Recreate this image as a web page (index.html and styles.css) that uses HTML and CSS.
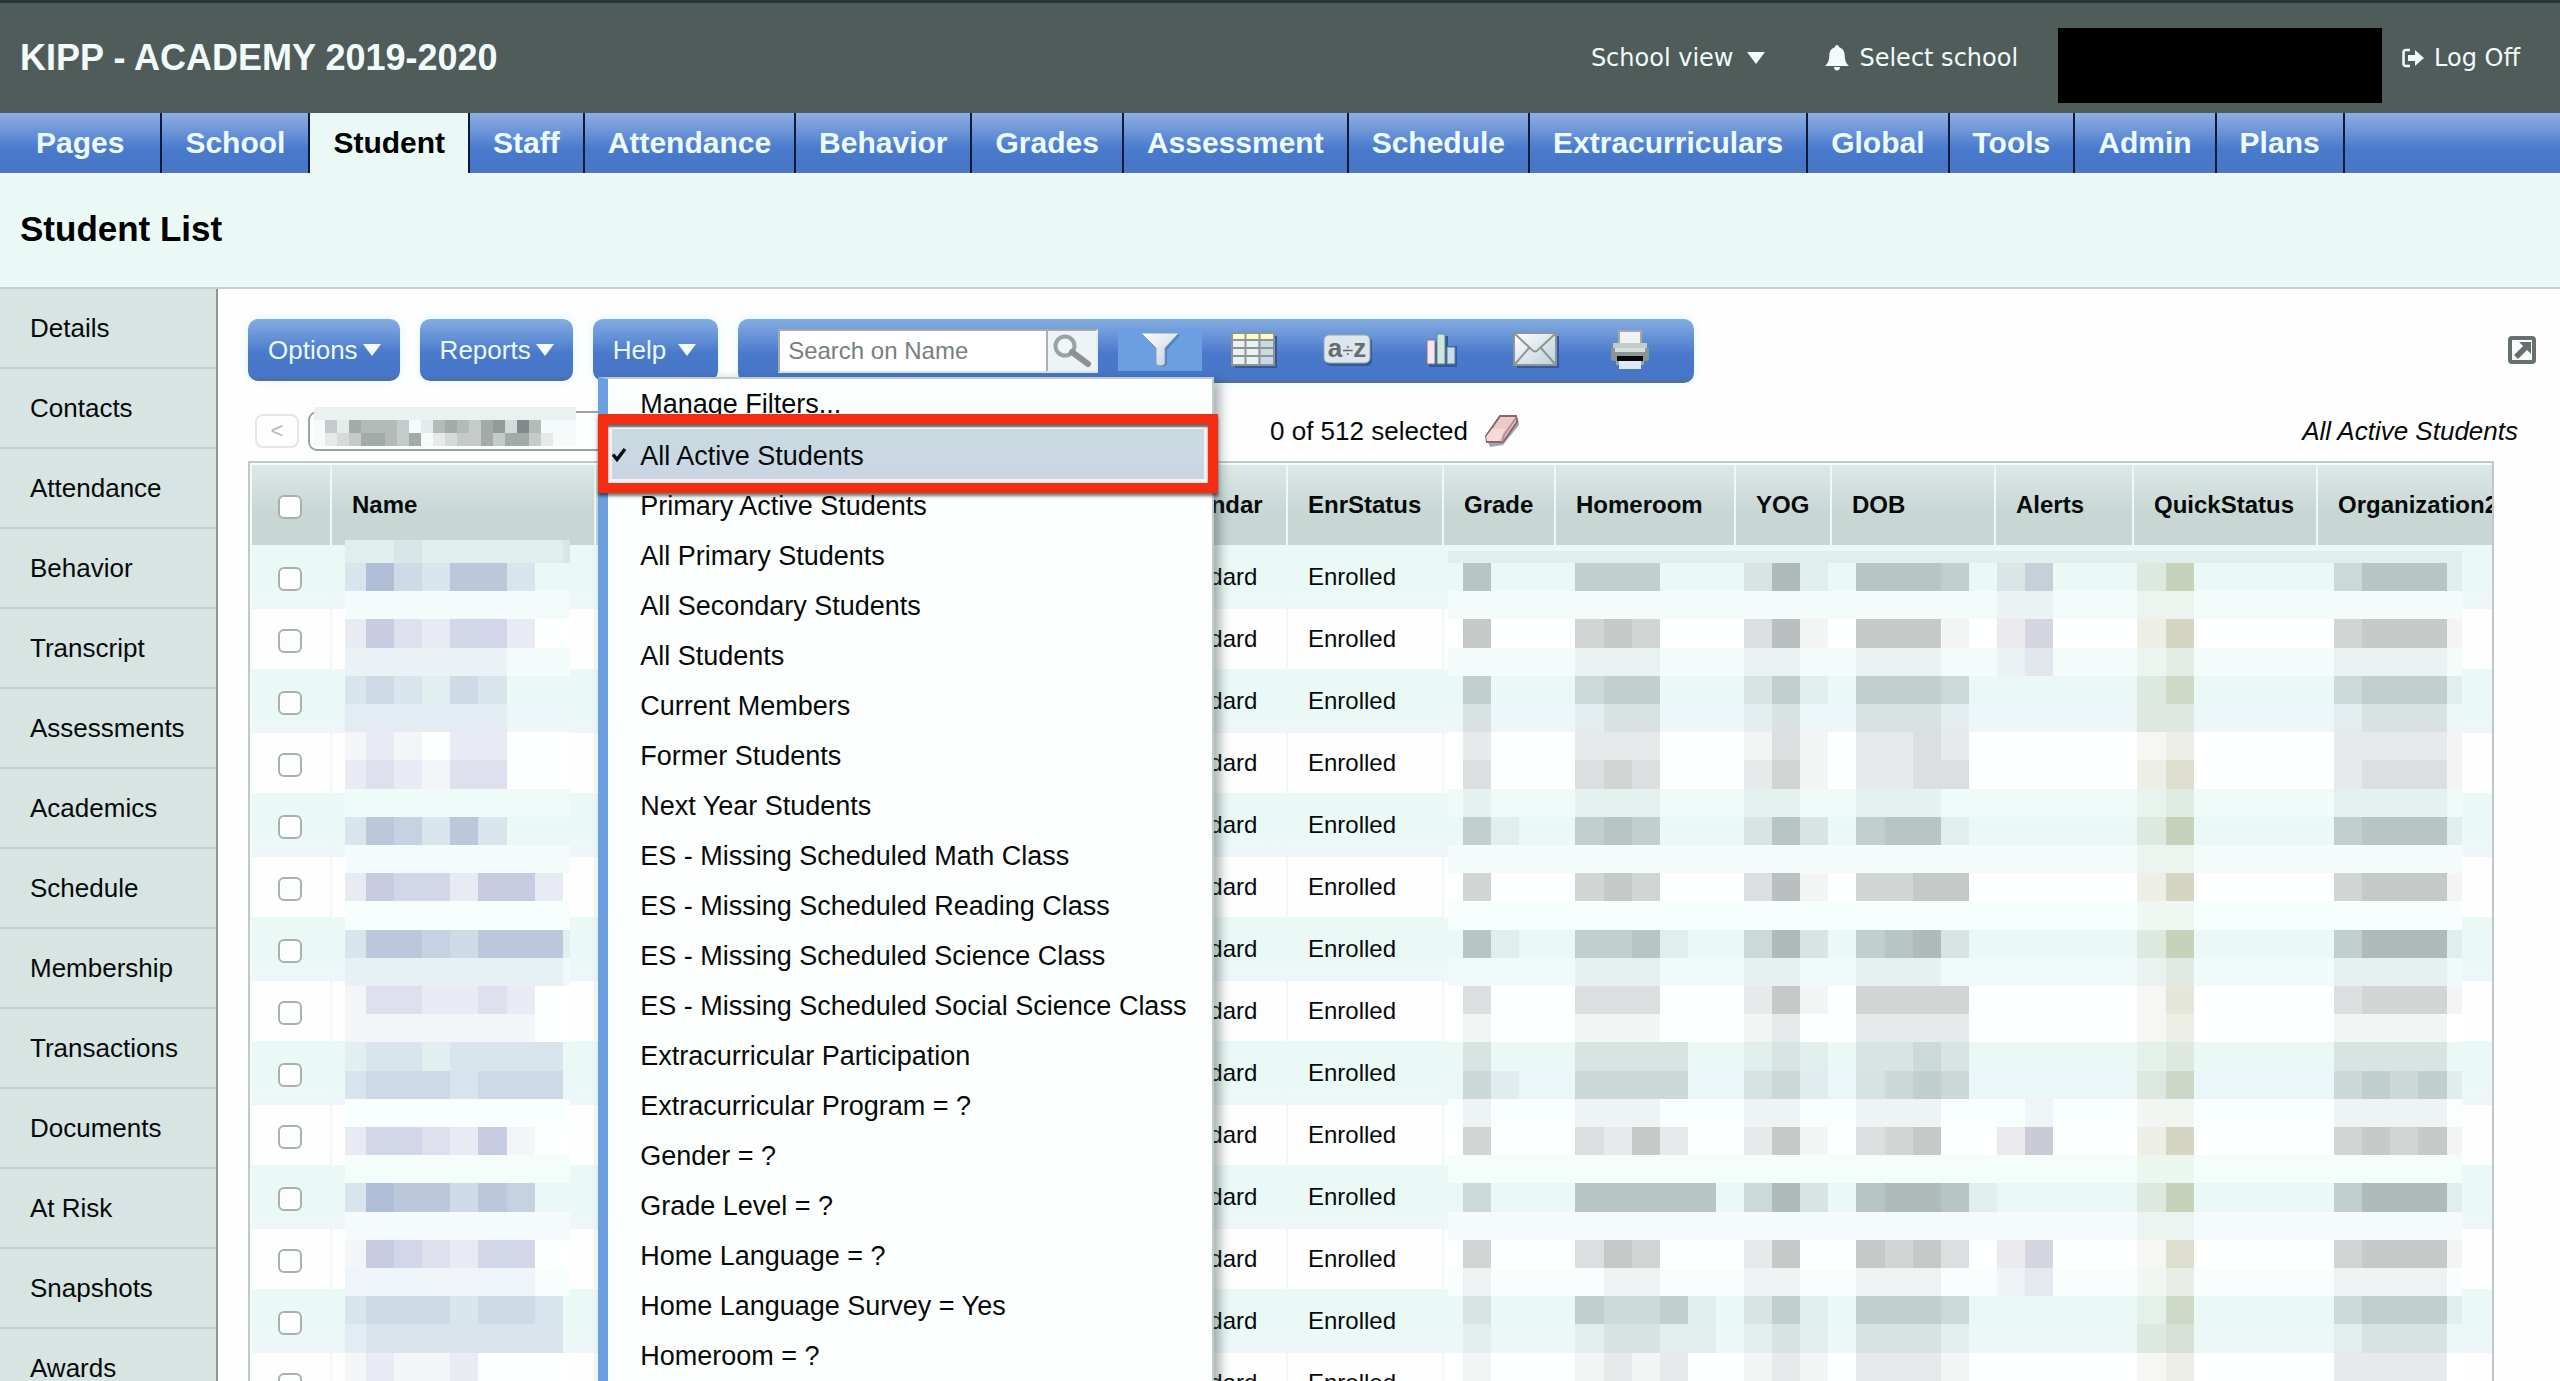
FILE: index.html
```html
<!DOCTYPE html>
<html lang="en">
<head>
<meta charset="utf-8">
<title>Student List</title>
<link rel="stylesheet" href="styles.css">
</head>
<body>
<header class="topbar">
  <div class="org">KIPP - ACADEMY 2019-2020</div>
  <div class="account">
    <button class="plain view" type="button">School view <svg class="caret" width="18" height="12" viewBox="0 0 18 12"><path d="M0 0h18L9 12z"/></svg></button>
    <a class="school" href="#"><svg width="24" height="26" viewBox="0 0 24 26"><path d="M12 0c1.400 0 2 1 2 2.200 4 1 5.600 4.300 5.700 8.300.1 5 1.300 8 4.300 10.500H0c3-2.500 4.200-5.500 4.300-10.500.1-4 1.700-7.300 5.700-8.300C10 1 10.600 0 12 0zM9 22h6c0 2-1.200 3.500-3 3.500S9 24 9 22z"/></svg>Select school</a>
    <div class="redacted"></div>
    <a class="logoff" href="#"><svg width="22" height="20" viewBox="0 0 22 20"><path d="M8 2H4Q1.500 2 1.500 4.500v11Q1.500 18 4 18h4" fill="none" stroke="#f2fbfa" stroke-width="2.500"/><path d="M6 7h7V2l9 8-9 8v-5H6z"/></svg>Log Off</a>
  </div>
</header>
<nav class="tabs">
  <a class="first" href="#">Pages</a><a href="#">School</a><a class="on" href="#">Student</a><a href="#">Staff</a><a href="#">Attendance</a><a href="#">Behavior</a><a href="#">Grades</a><a href="#">Assessment</a><a href="#">Schedule</a><a href="#">Extracurriculars</a><a href="#">Global</a><a href="#">Tools</a><a href="#">Admin</a><a href="#">Plans</a>
</nav>
<div class="heading"><h1>Student List</h1></div>
<div class="body">
  <nav class="side">
    <a href="#">Details</a><a href="#">Contacts</a><a href="#">Attendance</a><a href="#">Behavior</a><a href="#">Transcript</a><a href="#">Assessments</a><a href="#">Academics</a><a href="#">Schedule</a><a href="#">Membership</a><a href="#">Transactions</a><a href="#">Documents</a><a href="#">At Risk</a><a href="#">Snapshots</a><a href="#">Awards</a>
  </nav>
  <main>
    <div class="toolbar">
      <button class="btn" type="button">Options<svg class="caret" width="18" height="12" viewBox="0 0 18 12"><path d="M0 0h18L9 12z"/></svg></button>
      <button class="btn" type="button">Reports<svg class="caret" width="18" height="12" viewBox="0 0 18 12"><path d="M0 0h18L9 12z"/></svg></button>
      <button class="btn help" type="button">Help<svg class="caret" width="18" height="12" viewBox="0 0 18 12"><path d="M0 0h18L9 12z"/></svg></button>
      <div class="tools">
        <form class="search">
          <input type="text" placeholder="Search on Name" aria-label="Search on Name">
          <button type="button" aria-label="Search"><svg width="40" height="34" viewBox="0 0 40 34"><circle cx="13" cy="12" r="9.500" fill="#eef6f6" stroke="#9aa3a3" stroke-width="4"/><path d="M20 18L36 30" stroke="#8b9291" stroke-width="6" stroke-linecap="round"/></svg></button>
        </form>
        <div class="filter">
          <button class="tool active" type="button" aria-label="Filter"><svg width="40" height="36" viewBox="0 0 40 36"><defs><linearGradient id="metal" x1="0" x2="1" y2="1"><stop offset="0" stop-color="#fff"/><stop offset="1" stop-color="#bccfe0"/></linearGradient></defs><path d="M3 3h37L27 18v14q-5 5-9 1V19z" fill="#3f6aa8" opacity=".6"/><path d="M1 1h38L25 16v16q-5 4-9 0V16z" fill="url(#metal)" stroke="#8e9aa3" stroke-width="1"/></svg></button>
          <div class="menu" role="menu">
            <button type="button">Manage Filters...</button>
            <button type="button" class="chosen"><svg width="16" height="16" viewBox="0 0 16 16"><path d="M2 7.500L6 12.500 14 2" fill="none" stroke="#0a0f14" stroke-width="3.500"/></svg>All Active Students</button>
            <button type="button">Primary Active Students</button>
            <button type="button">All Primary Students</button>
            <button type="button">All Secondary Students</button>
            <button type="button">All Students</button>
            <button type="button">Current Members</button>
            <button type="button">Former Students</button>
            <button type="button">Next Year Students</button>
            <button type="button">ES - Missing Scheduled Math Class</button>
            <button type="button">ES - Missing Scheduled Reading Class</button>
            <button type="button">ES - Missing Scheduled Science Class</button>
            <button type="button">ES - Missing Scheduled Social Science Class</button>
            <button type="button">Extracurricular Participation</button>
            <button type="button">Extracurricular Program = ?</button>
            <button type="button">Gender = ?</button>
            <button type="button">Grade Level = ?</button>
            <button type="button">Home Language = ?</button>
            <button type="button">Home Language Survey = Yes</button>
            <button type="button">Homeroom = ?</button>
            <div class="callout"></div>
          </div>
        </div>
        <button class="tool" type="button" aria-label="Field set"><svg width="46" height="36" viewBox="0 0 46 36"><path d="M4 4h42v32H4z" fill="#33589c"/><path d="M1 1h42v32H1z" fill="#e9f1f5"/><path d="M1 1h42v7H1z" fill="#fbfbd0"/><path d="M27 9h16v24H27z" fill="#c9d9e8"/><path d="M1 1h42v32H1zM1 8h42M1 16h42M1 24h42M14.500 1v32M28.500 1v32" fill="none" stroke="#8f9690" stroke-width="2"/></svg></button>
        <button class="tool" type="button" aria-label="Sort"><svg width="50" height="34" viewBox="0 0 50 34"><rect x="3" y="4" width="46" height="29" rx="5" fill="#33589c"/><rect x="1" y="2" width="46" height="28" rx="5" fill="#dde6ec" stroke="#9aa3ab" stroke-width="1"/><text x="24" y="24" text-anchor="middle" class="az">a<tspan class="div">÷</tspan>z</text></svg></button>
        <button class="tool" type="button" aria-label="Charts"><svg width="34" height="36" viewBox="0 0 34 36"><path d="M4 10h10V4h9v10h9v21H4z" fill="#33589c"/><path d="M2 8h8v24H2z" fill="#f0e9f0" stroke="#8d6f86"/><path d="M12 2h8v30h-8z" fill="#cfe6dc" stroke="#5d8a86"/><path d="M22 15h8v17h-8z" fill="#cadbef" stroke="#5f7d9a"/></svg></button>
        <button class="tool" type="button" aria-label="Mail"><svg width="46" height="36" viewBox="0 0 46 36"><path d="M4 4h42v32H4z" fill="#33589c"/><path d="M1 1h42v32H1z" fill="url(#metal)" stroke="#8f9690" stroke-width="2"/><path d="M2 2l16 15q4 5 8 0L42 2M2 32l14-16M42 32L28 16" fill="none" stroke="#8f9690" stroke-width="2"/></svg></button>
        <button class="tool" type="button" aria-label="Print"><svg width="40" height="40" viewBox="0 0 40 40"><path d="M9 1h22v13H9z" fill="#edf3f2" stroke="#a9a9a0" stroke-width="2"/><path d="M3 13h34v6H3z" fill="#c3cccb"/><path d="M1 18h38v10q0 3-3 3H4q-3 0-3-3z" fill="#8b9694"/><circle cx="34" cy="20" r="1.500" fill="#8fdc7a"/><path d="M5 18h30v4H5z" fill="#d7dfdd"/><path d="M7 26h26v5H7z" fill="#050808"/><path d="M6 31h28v4H6z" fill="#9aa5ab"/><path d="M9 31h22v8H9z" fill="#dceafc"/></svg></button>
      </div>
      <button class="popout" type="button" aria-label="Open in new window"><svg width="28" height="28" viewBox="0 0 28 28"><rect x="2" y="2" width="24" height="24" rx="2" fill="#fbfefe" stroke="#66716f" stroke-width="4"/><path d="M11 6h12v12l-4-4-9 9-4-4 9-9z" fill="#66716f"/></svg></button>
    </div>
    <div class="status">
      <button class="prev" type="button">&lt;</button>
      <div class="picker">
        <select aria-label="Record"><option></option></select>
        <svg class="mosaic" id="mosaic-picker" width="262" height="39"></svg>
      </div>
      <span class="count">0 of 512 selected</span>
      <svg class="eraser" width="36" height="34" viewBox="0 0 36 34"><path d="M3 26l14-22h17l1 7-16 20-13 2z" fill="#5a6d86" opacity=".6"/><path d="M2 22L16 2h16l1 6-14 20H3z" fill="#eec9cb" stroke="#8d6468" stroke-width="2"/><path d="M8 15h13l-6 12H3l-1-4z" fill="#f6dada"/><path d="M18 28l2-7L32 4" fill="none" stroke="#b98c90" stroke-width="2"/></svg>
      <em>All Active Students</em>
    </div>
    <div class="grid">
      <table>
        <colgroup><col class="c-check"><col class="c-name"><col class="c-mid"><col class="c-cal"><col class="c-enr"><col class="c-grade"><col class="c-home"><col class="c-yog"><col class="c-dob"><col class="c-alert"><col class="c-quick"><col></colgroup>
        <thead><tr><th><input type="checkbox" aria-label="Select all"></th><th>Name</th><th></th><th>Calendar</th><th>EnrStatus</th><th>Grade</th><th>Homeroom</th><th>YOG</th><th>DOB</th><th>Alerts</th><th>QuickStatus</th><th>Organization2</th></tr></thead>
        <tbody>
          <tr><td><input type="checkbox" aria-label="Select row 1"></td><td></td><td></td><td>Standard</td><td>Enrolled</td><td colspan="7"></td></tr>
          <tr><td><input type="checkbox" aria-label="Select row 2"></td><td></td><td></td><td>Standard</td><td>Enrolled</td><td colspan="7"></td></tr>
          <tr><td><input type="checkbox" aria-label="Select row 3"></td><td></td><td></td><td>Standard</td><td>Enrolled</td><td colspan="7"></td></tr>
          <tr><td><input type="checkbox" aria-label="Select row 4"></td><td></td><td></td><td>Standard</td><td>Enrolled</td><td colspan="7"></td></tr>
          <tr><td><input type="checkbox" aria-label="Select row 5"></td><td></td><td></td><td>Standard</td><td>Enrolled</td><td colspan="7"></td></tr>
          <tr><td><input type="checkbox" aria-label="Select row 6"></td><td></td><td></td><td>Standard</td><td>Enrolled</td><td colspan="7"></td></tr>
          <tr><td><input type="checkbox" aria-label="Select row 7"></td><td></td><td></td><td>Standard</td><td>Enrolled</td><td colspan="7"></td></tr>
          <tr><td><input type="checkbox" aria-label="Select row 8"></td><td></td><td></td><td>Standard</td><td>Enrolled</td><td colspan="7"></td></tr>
          <tr><td><input type="checkbox" aria-label="Select row 9"></td><td></td><td></td><td>Standard</td><td>Enrolled</td><td colspan="7"></td></tr>
          <tr><td><input type="checkbox" aria-label="Select row 10"></td><td></td><td></td><td>Standard</td><td>Enrolled</td><td colspan="7"></td></tr>
          <tr><td><input type="checkbox" aria-label="Select row 11"></td><td></td><td></td><td>Standard</td><td>Enrolled</td><td colspan="7"></td></tr>
          <tr><td><input type="checkbox" aria-label="Select row 12"></td><td></td><td></td><td>Standard</td><td>Enrolled</td><td colspan="7"></td></tr>
          <tr><td><input type="checkbox" aria-label="Select row 13"></td><td></td><td></td><td>Standard</td><td>Enrolled</td><td colspan="7"></td></tr>
          <tr><td><input type="checkbox" aria-label="Select row 14"></td><td></td><td></td><td>Standard</td><td>Enrolled</td><td colspan="7"></td></tr>
        </tbody>
      </table>
      <svg class="mosaic" id="mosaic-name" width="225" height="841"></svg>
      <svg class="mosaic" id="mosaic-data" width="1014" height="830"></svg>
    </div>
  </main>
</div>
<script src="mosaic.js"></script>
</body>
</html>
```
FILE: mosaic.js
```js
// Pixelated privacy masks. Each digit is a darkness level for one block.
const MINT = [235, 249, 246], WHITE = [254, 255, 255];
const PALE = [244, 252, 251], DUSK = [237, 246, 248];
const bases = [[225, 239, 236], MINT, PALE, WHITE, PALE, MINT, DUSK, WHITE, WHITE, [239, 251, 249],
  MINT, PALE, WHITE, [246, 255, 253], MINT, [240, 250, 250], WHITE, WHITE, MINT, [234, 246, 247],
  [249, 254, 254], WHITE, [243, 254, 251], MINT, [245, 251, 253], WHITE, [248, 254, 254], MINT, [236, 247, 248], WHITE];

function draw(id, step, rows, xs, ys, baseOf, inkOf) {
  let out = '';
  rows.forEach((row, r) => {
    [...row.replace(/ /g, '')].forEach((d, c) => {
      const a = d * step, ink = inkOf(c), base = baseOf(r);
      const rgb = base.map((v, i) => Math.round(v * (1 - a) + ink[i] * a));
      out += `<rect x="${xs[c]}" y="${ys[r]}" width="${xs[c + 1] - xs[c]}" height="${ys[r + 1] - ys[r]}" fill="rgb(${rgb})"/>`;
    });
  });
  document.getElementById(id).innerHTML = out;
}

const steps = (lead, size, n, end) => {
  const list = [0];
  for (let k = 0; k < n; k++) list.push(Math.round(lead + size * k));
  if (end) list.push(end);
  return list;
};

draw('mosaic-data', 0.06, [
  '00000 000000 0000 00000 00000 00 00000 00000',
  '05000 444000 2610 55540 24000 25 00000 35551',
  '00000 000000 0000 00000 11000 11 00000 00000',
  '05000 454000 3610 55510 24000 25 00000 45551',
  '00000 111000 1100 11100 12000 12 00000 11110',
  '04000 344000 2410 44430 00000 24 00000 34441',
  '02000 122000 1200 22210 00000 22 00000 12220',
  '02000 222000 1310 22320 00000 12 00000 22221',
  '03000 343000 2410 22330 00000 24 00000 23331',
  '01000 111000 1100 11100 00000 12 00000 11110',
  '04100 454000 2520 45510 00000 25 00000 45551',
  '00000 000000 0000 00000 00000 11 00000 00000',
  '04000 454000 3610 44550 00000 25 00000 45551',
  '00000 000000 0000 00000 00000 11 00000 00000',
  '05100 445100 3620 45620 00000 25 00000 46661',
  '00000 111000 1100 11100 00000 12 00000 11110',
  '03000 333000 2510 44440 00000 13 00000 34441',
  '01000 111000 1200 22220 00000 12 00000 11110',
  '02000 222200 1210 22320 00000 12 00000 22220',
  '03100 333300 2310 23430 00000 24 00000 34341',
  '01000 111000 1100 11100 01000 11 00000 11110',
  '04000 325200 2510 34500 25000 25 00000 45451',
  '00000 000000 0000 00000 00000 11 00000 00000',
  '03000 555550 3620 56651 00000 25 00000 46661',
  '00000 000000 0000 00000 00000 11 00000 00000',
  '04000 354000 2500 54530 24000 14 00000 45551',
  '01000 011000 1100 11100 12000 12 00000 11110',
  '02000 433410 2410 44430 00000 14 00000 34441',
  '01000 122110 1210 22210 00000 23 00000 12220',
  '01000 121200 1210 22210 00000 12 00000 22220'
], steps(15, 28.1, 36, 1014), [0, ...steps(12, 28.2, 30).slice(1)],
  r => bases[r],
  c => (c === 25 || c === 26) ? [115, 118, 50] : (c === 20 || c === 21) ? [85, 80, 125] : [65, 78, 76]);

draw('mosaic-name', 0.06, [
  '001000001', '263255200', '000000000', '253244200', '111111000', '232132000', '111111000', '121022000',
  '232133000', '000000000', '254252000', '000000000', '254425520', '000000000', '255435551', '111111110',
  '133223200', '111111100', '122122220', '233323330', '000000000', '244325100', '000000000', '265535400',
  '000000000', '154324400', '111111100', '233323320', '122222220', '121120000'
], steps(21, 28.1, 8, 225), [0, ...steps(23, 28.2, 30).slice(1)],
  r => bases[r], () => [75, 85, 160]);

draw('mosaic-picker', 0.08, [
  '0000000000000000000000',
  '0315444301454356274000',
  '0123554350123353553100'
], steps(11, 12, 21, 262), [0, 13, 26, 39],
  r => r ? [245, 251, 250] : [234, 241, 240], () => [40, 50, 48]);
```
FILE: styles.css
```css
* { box-sizing: border-box; }
body {
  margin: 0;
  height: 100vh;
  overflow: hidden;
  display: flex;
  flex-direction: column;
  background: #fefefe;
  color: #060a0a;
  font: 26px/30px "Liberation Sans", Arial, sans-serif;
}
a { color: inherit; text-decoration: none; }
button, input, select { font: inherit; color: inherit; }
button { border: 0; padding: 0; background: none; }
svg { display: block; flex: none; }

.topbar {
  flex: none;
  height: 113px;
  padding: 0 40px 0 20px;
  display: flex;
  align-items: center;
  justify-content: space-between;
  border-top: 3px solid #263834;
  background: #4f5c5a;
  color: #f2fbfa;
}
.topbar svg { fill: #f2fbfa; }
.org { font-size: 36px; line-height: 40px; font-weight: bold; }
.account { display: flex; align-items: center; height: 100%; font: 24px/28px "DejaVu Sans", Verdana, sans-serif; }
.account > * { display: flex; align-items: center; }
.view { gap: 14px; }
.school { gap: 10px; margin: 0 40px 0 60px; }
.redacted { align-self: flex-end; width: 324px; height: 75px; margin: 0 20px 10px 0; background: #000; }
.logoff { gap: 10px; }

.tabs {
  flex: none;
  height: 60px;
  display: flex;
  background: linear-gradient(#8fafe3, #4a7acd 60%, #4676c8 95%, #60779a);
  color: #ecfbff;
  font-size: 30px;
  font-weight: bold;
}
.tabs a { padding: 0 23px; line-height: 60px; border-right: 2px solid #0d1a3a; }
.tabs .first { padding: 0 36px; }
.tabs .on { background: #ebf9f6; color: #000; }

.heading { flex: none; height: 116px; padding: 36px 20px; background: #ebf9f6; border-bottom: 2px solid #c5ced5; }
h1 { margin: 0; font-size: 35px; line-height: 40px; color: #000; }

.body { flex: 1; min-height: 0; display: flex; }
.side { flex: none; width: 218px; background: #d8e4e2; border-right: 2px solid #8f9796; overflow: hidden; }
.side a { display: block; height: 80px; padding-left: 30px; line-height: 78px; border-bottom: 2px solid #c3d0ce; }

main { flex: 1; min-width: 0; padding: 30px 66px 0 30px; }
.toolbar { display: flex; align-items: flex-start; gap: 20px; height: 64px; margin-right: -42px; }
.btn, .tools {
  border-radius: 10px;
  background: linear-gradient(#85aee3, #4a79cb 55%, #4676c8 92%, #5c6c86);
  color: #eafaff;
  box-shadow: 0 0 8px #d8f6ff;
}
.btn { display: flex; align-items: center; gap: 5px; height: 62px; padding: 0 19px 0 20px; }
.help { gap: 12px; padding-right: 22px; }
.caret { fill: #f2fcff; }
.tools { display: flex; height: 64px; width: 956px; padding: 10px 20px 0 40px; gap: 10px; }
.search { display: flex; width: 320px; height: 44px; margin-right: 10px; border: 2px solid #aaa9a9; border-right-color: #e4eff3; border-bottom-color: #d9e6ef; background: #fff; }
.search input { flex: 1; min-width: 0; border: 0; border-right: 2px solid #a9b2b2; padding: 0 8px; background: none; font-size: 24px; outline: 0; }
.search input::placeholder { color: #76807e; opacity: 1; }
.search button { width: 48px; background: #edf4f5; display: grid; place-items: center; }
.tool { width: 84px; height: 42px; display: grid; place-items: center; }
.active { background: #6a9fe2; }
.az { font: bold 26px "Liberation Sans", Arial, sans-serif; fill: #666d70; }
.div { font-size: 20px; font-weight: normal; }
.popout { margin: 17px 0 0 auto; }

.filter { position: relative; }
.menu {
  position: absolute;
  z-index: 5;
  top: 48px;
  right: -12px;
  width: 616px;
  min-height: 1100px;
  border: 2px solid #c2cacc;
  border-left: 10px solid #6c9fe0;
  background: #fdfefe;
  box-shadow: 6px 4px 10px rgba(40, 60, 60, .4);
  color: #060a0a;
}
.menu button { position: relative; display: block; width: 100%; height: 50px; padding-left: 32px; text-align: left; font-size: 27px; white-space: nowrap; }
.menu .chosen { height: 52px; padding-top: 2px; background: linear-gradient(#c9dae0, #c9d7e3 80%, #cdd3dc); }
.chosen svg { position: absolute; left: 3px; top: 18px; }
.callout {
  position: absolute;
  top: 35px;
  left: -10px;
  width: 620px;
  height: 79px;
  border: 10px solid #f42c12;
  box-shadow: 0 3px 3px rgba(0, 0, 0, .55), inset 0 3px 2px #6e6464, inset 0 0 0 4px #f8efee;
}

.status { display: flex; align-items: center; height: 40px; margin: 28px -24px 0 7px; }
.prev { width: 44px; height: 34px; border: 2px solid #e1e8e8; border-radius: 8px; color: #b0b6b6; font-size: 22px; line-height: 28px; }
.picker { position: relative; width: 860px; height: 40px; margin: 0 102px 0 9px; }
.picker select { width: 100%; height: 40px; border: 2px solid #9da3a2; border-radius: 9px; background: #fdfefe; appearance: none; }
.eraser { margin-left: 16px; }
.status em { margin-left: auto; }

.grid { position: relative; margin-top: 10px; padding: 2px 0 0 2px; border: 2px solid #bfc9c9; background: #f4fcfa; overflow: hidden; }
table { width: 100%; table-layout: fixed; border-collapse: separate; border-spacing: 0; font-size: 24px; }
.c-check { width: 80px; }
.c-name { width: 264px; }
.c-mid { width: 544px; }
.c-cal { width: 148px; }
.c-enr { width: 156px; }
.c-grade { width: 112px; }
.c-home { width: 180px; }
.c-yog { width: 96px; }
.c-dob { width: 164px; }
.c-alert { width: 138px; }
.c-quick { width: 184px; }
th, td { padding: 0 0 0 20px; border-right: 2px solid #f1f6f6; text-align: left; white-space: nowrap; overflow: hidden; }
th { height: 80px; background: linear-gradient(#dbe8e5, #c9d7d4 60%); border-color: #eef9f7; }
th:last-child, td:last-child { border-right: 0; }
td { height: 60px; background: #fefefe; }
tr:nth-child(odd) td { height: 64px; background: linear-gradient(#ebf9f6 70%, #eff5fa); border-right-color: #ebf9f6; }
th:first-child, td:first-child { padding-left: 26px; }
input[type="checkbox"] {
  appearance: none;
  display: block;
  width: 24px;
  height: 24px;
  margin: 4px 0 0;
  border: 2px solid #a9b1b0;
  border-radius: 6px;
  background: #fcfefe;
}
.mosaic { position: absolute; }
#mosaic-picker { left: 6px; top: -4px; }
#mosaic-name { left: 95px; top: 77px; }
#mosaic-data { left: 1198px; top: 88px; }
```
